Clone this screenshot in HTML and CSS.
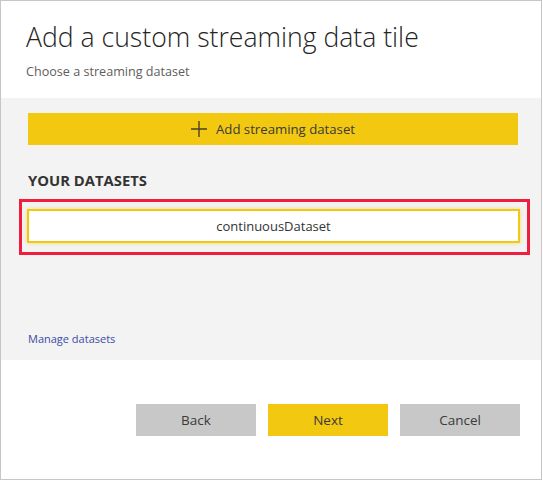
FILE: index.html
```html
<!DOCTYPE html>
<html>
<head>
<meta charset="utf-8">
<link rel="stylesheet" href="styles.css">
</head>
<body>
<div class="dialog">
  <div class="header">
    <h1 class="title">Add a custom streaming data tile</h1>
    <p class="subtitle">Choose a streaming dataset</p>
  </div>
  <div class="panel">
    <button class="add-btn">
      <svg class="plus" width="16" height="16" viewBox="0 0 16 16"><path d="M8 0V16M0 8H16" stroke="#4a4320" stroke-width="1.4" fill="none"/></svg>
      <span>Add streaming dataset</span>
    </button>
    <div class="section-label">YOUR DATASETS</div>
    <div class="highlight">
      <div class="dataset-item">continuousDataset</div>
    </div>
    <a class="manage-link">Manage datasets</a>
  </div>
  <div class="footer">
    <button class="btn btn-gray">Back</button>
    <button class="btn btn-yellow">Next</button>
    <button class="btn btn-gray">Cancel</button>
  </div>
</div>
</body>
</html>
```

FILE: styles.css
```css
* { box-sizing: border-box; }
html, body { margin: 0; padding: 0; background: #fff; }
body { font-family: "Open Sans", "Noto Sans", sans-serif; color: #333; }

.dialog {
  width: 542px;
  height: 480px;
  border: 1px solid #c6c6c6;
  display: flex;
  flex-direction: column;
  background: #fff;
}

.header {
  height: 97px;
  padding: 18px 0 0 25px;
}
.title {
  margin: 0;
  font-weight: 300;
  font-size: 26.6px;
  line-height: 36px;
  color: #252423;
}
.subtitle {
  margin: 9px 0 0 0;
  font-size: 12.6px;
  line-height: 16px;
  color: #605e5c;
}

.panel {
  height: 262px;
  background: #f3f3f3;
  padding: 15px 23px 13px 27px;
  display: flex;
  flex-direction: column;
}
.add-btn {
  height: 32px;
  border: none;
  background: #f2c811;
  display: flex;
  align-items: center;
  justify-content: center;
  gap: 9px;
  font-family: inherit;
  font-size: 13.2px;
  color: #3b3a39;
  padding: 0;
}
.plus { display: block; }

.section-label {
  margin-top: 25px;
  font-weight: 700;
  font-size: 14.8px;
  line-height: 20px;
  color: #333;
}

.highlight {
  margin: 9px -12px 0 -9px;
  border: 3px solid #f01d3c;
  padding: 7px 7px 9px 5px;
}
.dataset-item {
  height: 34px;
  background: #fff;
  border: 2px solid #f2c811;
  box-shadow: 0 0 4px rgba(242, 200, 17, 0.55);
  display: flex;
  align-items: center;
  justify-content: center;
  font-size: 13px;
  color: #333;
}

.manage-link {
  margin-top: auto;
  font-size: 11px;
  line-height: 16px;
  color: #3a4ca6;
  cursor: pointer;
}

.footer {
  flex: 1;
  display: flex;
  justify-content: flex-end;
  align-items: flex-start;
  gap: 12px;
  padding: 44px 21px 0 0;
}
.btn {
  width: 120px;
  height: 32px;
  border: none;
  font-family: inherit;
  font-size: 13.5px;
  color: #3b3a39;
  padding: 0;
}
.btn-gray { background: #c8c8c8; }
.btn-yellow { background: #f2c811; }
```
